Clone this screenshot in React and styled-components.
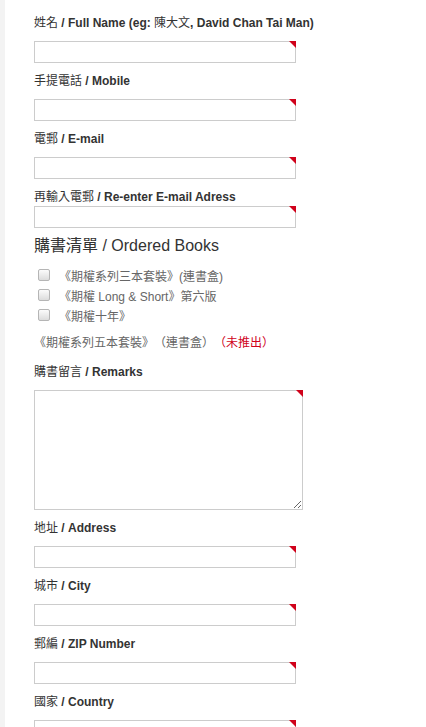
import React from "react"
import styled, { createGlobalStyle } from "styled-components"

const GlobalStyle = createGlobalStyle`
  html, body {
    margin: 0;
    padding: 0;
    background: #fff;
  }
  body {
    font-family: "Liberation Sans", Arial, "Noto Sans CJK TC", sans-serif;
    color: #333;
    text-spacing-trim: space-all;
  }
`

const Page = styled.div`
  min-height: 100vh;
  border-left: 5px solid #f3f3f3;
  padding: 14px 0 0 29px;
  box-sizing: border-box;
`

const Field = styled.div`
  margin-bottom: ${(p) => (p.$last ? "0" : "9px")};
`

const Label = styled.label`
  display: block;
  font-size: 12px;
  line-height: 16px;
  padding-top: 1px;
  font-weight: bold;
  color: #333;
  margin-bottom: ${(p) => (p.$tight ? "1px" : "10px")};
`

const Zh = styled.span`
  font-weight: normal;
`

const Box = styled.div`
  position: relative;
  width: ${(p) => p.$width || "262px"};
`

const Corner = styled.span`
  position: absolute;
  top: 0;
  right: 0;
  width: 0;
  height: 0;
  border-top: 7px solid #d0021b;
  border-left: 7px solid transparent;
  pointer-events: none;
`

const Input = styled.input`
  display: block;
  width: 100%;
  height: 22px;
  box-sizing: border-box;
  border: 1px solid #ccc;
  border-radius: 0;
  padding: 2px 4px;
  font: inherit;
  font-size: 12px;
  outline: none;
`

const TextArea = styled.textarea`
  display: block;
  width: 100%;
  height: 120px;
  box-sizing: border-box;
  border: 1px solid #ccc;
  border-radius: 0;
  padding: 2px 4px;
  font: inherit;
  font-size: 12px;
  outline: none;
`

const Heading = styled.h3`
  margin: 7px 0 8px;
  font-size: 16px;
  line-height: 22px;
  font-weight: normal;
  color: #333;
`

const BookList = styled.ul`
  list-style: none;
  margin: 0;
  padding: 0;
`

const BookRow = styled.li`
  display: flex;
  align-items: center;
  height: 20px;
  font-size: 12px;
  color: #666;
`

const Check = styled.input.attrs({ type: "checkbox" })`
  appearance: none;
  width: 12px;
  height: 12px;
  margin: 0 9px 0 4px;
  border: 1px solid #b5b5b5;
  border-radius: 2px;
  background: linear-gradient(#fbfbfb, #dcdcdc);
  box-sizing: border-box;
`

const Note = styled.p`
  margin: 8px 0 10px;
  font-size: 12px;
  line-height: 20px;
  color: #666;
`

const Red = styled.span`
  color: #d0021b;
`

const TextField = ({ zh, children, tight, last }) => (
  <Field $last={last}>
    <Label $tight={tight}>
      <Zh>{zh}</Zh> / {children}
    </Label>
    <Box>
      <Input type="text" />
      <Corner />
    </Box>
  </Field>
)

const books = [
  "《期權系列三本套裝》(連書盒)",
  "《期權 Long & Short》第六版",
  "《期權十年》",
]

export default function App() {
  return (
    <>
      <GlobalStyle />
      <Page>
        <TextField zh="姓名">
          Full Name (eg: <Zh>陳大文</Zh>, David Chan Tai Man)
        </TextField>
        <TextField zh="手提電話">Mobile</TextField>
        <TextField zh="電郵">E-mail</TextField>
        <TextField zh="再輸入電郵" tight last>
          Re-enter E-mail Adress
        </TextField>

        <Heading>購書清單 / Ordered Books</Heading>
        <BookList>
          {books.map((b) => (
            <BookRow key={b}>
              <Check />
              {b}
            </BookRow>
          ))}
        </BookList>
        <Note>
          《期權系列五本套裝》（連書盒）<Red>（未推出）</Red>
        </Note>

        <Field>
          <Label>
            <Zh>購書留言</Zh> / Remarks
          </Label>
          <Box $width="269px">
            <TextArea />
            <Corner />
          </Box>
        </Field>

        <TextField zh="地址">Address</TextField>
        <TextField zh="城市">City</TextField>
        <TextField zh="郵編">ZIP Number</TextField>
        <TextField zh="國家">Country</TextField>
      </Page>
    </>
  )
}
